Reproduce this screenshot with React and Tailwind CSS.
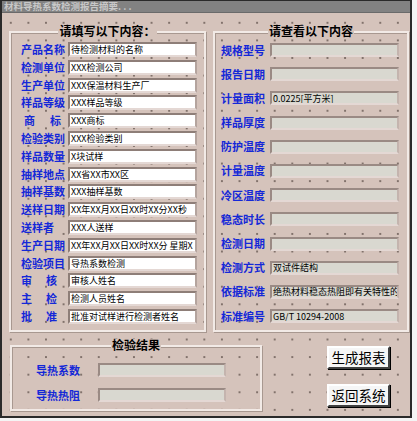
import React from "react";

const FONT = { fontFamily: '"Noto Sans CJK SC", "Noto Sans", sans-serif' };

const leftRows = [
  ["产品名称", "待检测材料的名称"],
  ["检测单位", "XXX检测公司"],
  ["生产单位", "XXX保温材料生产厂"],
  ["样品等级", "XXX样品等级"],
  ["商标", "XXX商标", "sp4"],
  ["检验类别", "XXX检验类别"],
  ["样品数量", "X块试样"],
  ["抽样地点", "XX省XX市XX区"],
  ["抽样基数", "XXX抽样基数"],
  ["送样日期", "XX年XX月XX日XX时XX分XX秒"],
  ["送样者", "XXX人送样"],
  ["生产日期", "XX年XX月XX日XX时XX分  星期X"],
  ["检验项目", "导热系数检测"],
  ["审核", "审核人姓名", "sp1"],
  ["主检", "检测人员姓名", "sp1"],
  ["批准", "批准对试样进行检测者姓名", "sp1"],
];

const rightRows = [
  ["规格型号", ""],
  ["报告日期", ""],
  ["计量面积", "0.0225[平方米]"],
  ["样品厚度", ""],
  ["防护温度", ""],
  ["计量温度", ""],
  ["冷区温度", ""],
  ["稳态时长", ""],
  ["检测日期", ""],
  ["检测方式", "双试件结构"],
  ["依据标准", "绝热材料稳态热阻即有关特性的测"],
  ["标准编号", "GB/T 10294-2008"],
];

function Label({ text, kind }) {
  if (kind === "sp4") {
    return (
      <div className="flex justify-between w-[37px] ml-[3px] text-[11px] font-bold text-[#1428d8] leading-none">
        <span>{text[0]}</span>
        <span>{text[1]}</span>
      </div>
    );
  }
  if (kind === "sp1") {
    return (
      <div className="flex justify-between w-[36px] text-[11px] font-bold text-[#1428d8] leading-none">
        <span>{text[0]}</span>
        <span>{text[1]}</span>
      </div>
    );
  }
  return (
    <div className="text-[11px] font-bold text-[#1428d8] leading-none whitespace-nowrap">{text}</div>
  );
}

function WhiteField({ value }) {
  return (
    <div className="h-[15px] w-[129px] bg-white border-2 border-t-[#8e7e78] border-l-[#8e7e78] border-r-[#b4a49e] border-b-[#e4d8d4] flex items-center pl-[1px] overflow-hidden">
      <span className="text-[9px] leading-none text-black whitespace-nowrap">{value}</span>
    </div>
  );
}

function GrayField({ value, w }) {
  return (
    <div
      className="h-[14px] bg-[#d9d8d0] border-2 border-t-[#9a8a84] border-l-[#9a8a84] border-r-[#c4b4ae] border-b-[#e4d8d4] flex items-center pl-[1px] overflow-hidden"
      style={{ width: w }}
    >
      <span className="text-[9px] leading-none text-black whitespace-nowrap">{value}</span>
    </div>
  );
}

function GroupTitle({ children }) {
  return (
    <div className="absolute -top-[8px] left-0 right-0 flex justify-center">
      <span className="bg-[#d5c3bb] px-[1px] text-[12px] font-bold text-black leading-none">{children}</span>
    </div>
  );
}

export default function App() {
  return (
    <div className="w-[417px] h-[421px] bg-[#f4f4f4]" style={FONT}>
      <div className="w-[412px] h-[418px] border-2 border-t-[1px] border-[#2a2a2a] bg-[#d5c3bb] flex flex-col">
        <div className="h-[12px] bg-[#828282] border-b border-[#6a6a6a] flex items-center pl-[2px]">
          <span className="text-[9.5px] font-bold text-[#c8c8c8] leading-none whitespace-nowrap">
            材料导热系数检测报告摘要. . .
          </span>
        </div>
        <div className="flex-1 bg-[radial-gradient(circle,#6f605a_0.6px,transparent_1.1px)] bg-[length:17.6px_17.6px] bg-[position:0px_1px] pl-[7px] pt-[18px]">
          <div className="flex gap-[7px]">
            <div className="relative w-[197px] h-[301px] border-2 border-[#f2eae6] shadow-[inset_1px_1px_0_#a89890,1px_1px_0_#a89890]">
              <GroupTitle>请填写以下内容：</GroupTitle>
              <div className="grid grid-cols-[47px_129px] gap-y-[2.8px] pl-[10px] pt-[9px] items-center">
                {leftRows.map(([l, v, k]) => (
                  <React.Fragment key={l}>
                    <Label text={l} kind={k} />
                    <WhiteField value={v} />
                  </React.Fragment>
                ))}
              </div>
            </div>
            <div className="relative w-[196px] h-[301px] border-2 border-[#f2eae6] shadow-[inset_1px_1px_0_#a89890,1px_1px_0_#a89890]">
              <GroupTitle>请查看以下内容</GroupTitle>
              <div className="grid grid-cols-[49px_129px] gap-y-[10.2px] pl-[6px] pt-[10px] items-center">
                {rightRows.map(([l, v]) => (
                  <React.Fragment key={l}>
                    <Label text={l} />
                    <GrayField value={v} w={129} />
                  </React.Fragment>
                ))}
              </div>
            </div>
          </div>
          <div className="flex mt-[13px]">
            <div className="relative ml-[1px] w-[252px] h-[66px] border-2 border-[#f2eae6] shadow-[inset_1px_1px_0_#a89890,1px_1px_0_#a89890]">
              <GroupTitle>检验结果</GroupTitle>
              <div className="grid grid-cols-[62px_128px] gap-y-[11px] pl-[24px] pt-[16px] items-center">
                <Label text="导热系数" />
                <GrayField value="" w={128} />
                <Label text="导热热阻" />
                <GrayField value="" w={128} />
              </div>
            </div>
            <div className="flex flex-col gap-[15px] ml-[65px] mt-[1px]">
              <button className="w-[63px] h-[23px] bg-[#f6f6f6] border-2 border-t-white border-l-white border-r-[#404040] border-b-[#404040] shadow-[1px_1px_0_#000] text-[13.5px] text-black leading-none flex items-center justify-center">
                生成报表
              </button>
              <button className="w-[63px] h-[23px] bg-[#f6f6f6] border-2 border-t-white border-l-white border-r-[#404040] border-b-[#404040] shadow-[1px_1px_0_#000] text-[13.5px] text-black leading-none flex items-center justify-center">
                返回系统
              </button>
            </div>
          </div>
        </div>
      </div>
    </div>
  );
}
